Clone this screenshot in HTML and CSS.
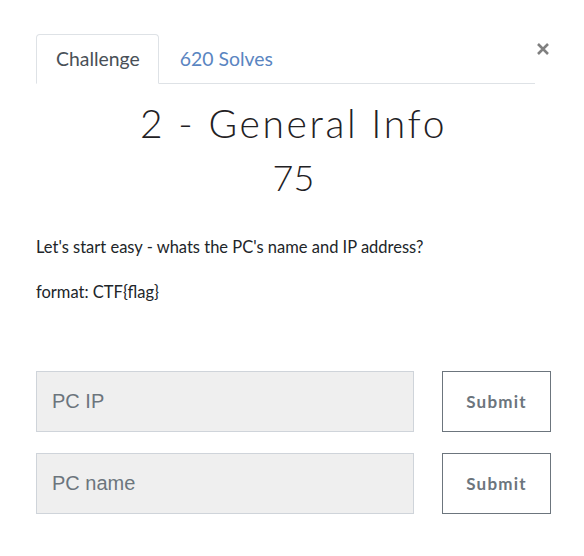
FILE: index.html
```html
<!DOCTYPE html>
<html>
<head>
<meta charset="utf-8">
<link rel="stylesheet" href="styles.css">
</head>
<body>
<div class="modal">
  <div class="head">
    <ul class="tabs">
      <li class="tab active">Challenge</li>
      <li class="tab link">620 Solves</li>
    </ul>
    <button class="close" aria-label="Close">
      <svg width="12" height="12" viewBox="0 0 12 12"><path d="M1 1L11 11M11 1L1 11" stroke="#808080" stroke-width="2.6" stroke-linecap="butt"/></svg>
    </button>
  </div>
  <h2 class="title">2 - General Info</h2>
  <h3 class="value">75</h3>
  <div class="desc">
    <p>Let's start easy - whats the PC's name and IP address?</p>
    <p>format: CTF{flag}</p>
  </div>
  <div class="forms">
    <div class="row">
      <input class="field" type="text" placeholder="PC IP">
      <button class="submit">Submit</button>
    </div>
    <div class="row">
      <input class="field" type="text" placeholder="PC name">
      <button class="submit">Submit</button>
    </div>
  </div>
</div>
</body>
</html>
```
FILE: styles.css
```css
html, body {
  margin: 0;
  padding: 0;
  background: #fff;
}
body {
  font-family: "Lato", "Liberation Sans", sans-serif;
  color: #212529;
  width: 584px;
  height: 556px;
  overflow: hidden;
}
.modal {
  padding: 34px 33px 0 36px;
}
.head {
  display: flex;
  align-items: flex-start;
}
.tabs {
  flex: 0 0 499px;
  display: flex;
  list-style: none;
  margin: 0;
  padding: 0;
  border-bottom: 1px solid #dee2e6;
}
.tab {
  font-size: 19.4px;
  line-height: 24px;
  padding: 12px 18px 12px 19px;
  border: 1px solid transparent;
  border-top-left-radius: 4px;
  border-top-right-radius: 4px;
  margin-bottom: -1px;
}
.tab.active {
  color: #495057;
  border-color: #dee2e6 #dee2e6 #fff;
  background: #fff;
}
.tab.link {
  color: #5a85c1;
  padding-left: 20px;
}
.close {
  flex: 1;
  display: flex;
  justify-content: flex-end;
  background: none;
  border: 0;
  padding: 0 2px 0 0;
  margin-top: 9px;
}
.title {
  margin: 14px 0 0;
  text-align: center;
  font-family: "Lato", sans-serif;
  font-weight: 300;
  font-size: 39px;
  line-height: 50px;
  letter-spacing: 2.6px;
  color: #1f2124;
}
.value {
  margin: 4px 0 0;
  text-align: center;
  font-family: "Lato", sans-serif;
  font-weight: 300;
  font-size: 36px;
  line-height: 50px;
  color: #1f2124;
}
.desc {
  margin-top: 33px;
  font-size: 16.5px;
  line-height: 24px;
}
.desc p {
  margin: 0 0 21px;
}
.forms {
  margin-top: 67px;
  display: flex;
  flex-direction: column;
  gap: 21px;
}
.row {
  display: flex;
  gap: 28px;
}
.field {
  flex: 0 0 378px;
  box-sizing: border-box;
  height: 61px;
  margin: 0;
  padding: 0 15px;
  background: #efefef;
  border: 1px solid #cfd4da;
  border-radius: 0;
  font-family: "Liberation Sans", sans-serif;
  font-size: 20px;
  color: #495057;
}
.field::placeholder {
  color: #6c757d;
}
.submit {
  box-sizing: border-box;
  width: 110px;
  height: 61px;
  background: #fff;
  border: 1px solid #6c757d;
  border-radius: 0;
  font-family: "Lato", sans-serif;
  font-weight: 700;
  font-size: 17px;
  letter-spacing: 1.2px;
  color: #6c757d;
}
```
